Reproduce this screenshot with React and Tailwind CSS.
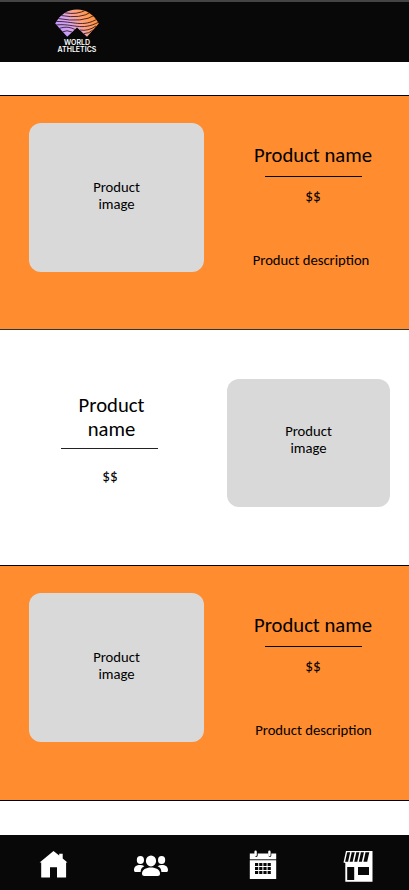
import React from "react";

function WorldAthleticsLogo() {
  return (
    <div className="flex w-[44px] flex-col items-center">
      <svg width="44" height="28" viewBox="0 0 44 28" className="block">
        <defs>
          <linearGradient id="fan" x1="0" y1="0.75" x2="1" y2="0.3">
            <stop offset="0" stopColor="#b894ff" />
            <stop offset="0.36" stopColor="#dca4f0" />
            <stop offset="0.6" stopColor="#ffa080" />
            <stop offset="1" stopColor="#ff9028" />
          </linearGradient>
          <clipPath id="fanClip">
            <path d="M0.2 14.6 C5 5.5 12.5 0.5 22 0.5 S39 5.5 43.8 14.6 L32 27.7 L22 18.6 L12.2 27.7Z" />
          </clipPath>
        </defs>
        <g clipPath="url(#fanClip)">
          <rect width="44" height="28" fill="url(#fan)" />
          <g fill="none" stroke="#1c0c10" strokeWidth="0.8">
            <path d="M10 3.8 Q22 6 31 1" />
            <path d="M6 6.5 Q26 10 36 3" />
            <path d="M3 9.5 Q28 14 40 6" />
            <path d="M1 12.5 C18 12 28 19 43 9.5" />
            <path d="M1 16 C18 14 26 22.5 44 13" />
            <path d="M4 19.5 C11 17 16 18.5 20 20.5" />
            <path d="M7 23 Q12 20.5 17 23" />
            <path d="M25 21 Q33 22.5 41 17" />
            <path d="M29 24.6 Q34 24.5 38 21" />
          </g>
        </g>
      </svg>
      <div className="mt-[2px] flex flex-col items-center whitespace-nowrap font-['Inter',sans-serif] text-[7px] font-semibold text-white">
        <span className="h-[7px] leading-[7px]">WORLD</span>
        <span className="h-[7px] leading-[7px]">ATHLETICS</span>
      </div>
    </div>
  );
}

function ImagePlaceholder({ className }) {
  return (
    <div className={"shrink-0 rounded-[12px] bg-[#d9d9d9] text-center text-[14.67px] leading-[16.5px] " + className}>
      Product
      <br />
      image
    </div>
  );
}

function FeaturedProduct({ className, descriptionClass }) {
  return (
    <section className={"flex border-t border-black bg-[#ff8c2e] pl-[29px] pt-[27px] " + className}>
      <ImagePlaceholder className="h-[149px] w-[175px] pt-[56px]" />
      <div className="ml-[39px] mt-[20px] flex w-[140px] flex-col items-center whitespace-nowrap">
        <h2 className="text-[20.67px] leading-[24px]">Product name</h2>
        <div className="mt-[9px] h-px w-[97px] bg-black" />
        <p className="mt-[11px] text-[15.3px] leading-[17px]">$$</p>
        <p className={"mt-[47px] text-[14.67px] leading-[17px] " + descriptionClass}>Product description</p>
      </div>
    </section>
  );
}

function HomeIcon() {
  return (
    <svg width="30" height="28" viewBox="0 0 30 28" fill="#fff">
      <path d="M0.6 12.5 14.5 1 20.2 5.6V3.7h3.5v4.9l4.8 3.9h-1.4V27.6H18V17.2h-7v10.4H2.2V12.5Z" />
    </svg>
  );
}

function PeopleIcon() {
  return (
    <svg width="36" height="22" viewBox="0 0 36 22" fill="#fff">
      <ellipse cx="7.4" cy="5" rx="3.6" ry="4" />
      <ellipse cx="28.6" cy="5" rx="3.6" ry="4" />
      <path d="M1 15.3C1 11.7 3.2 10 7.2 10q2.5 0 4.2 1.3C8.5 12.5 7.8 14 7.6 17H2.3Q1 17 1 15.3ZM35 15.3c0-3.6-2.2-5.3-6.2-5.3q-2.5 0-4.2 1.3c2.9 1.2 3.6 2.7 3.8 5.7h5.3Q35 17 35 15.3Z" />
      <ellipse cx="18" cy="5.9" rx="5.1" ry="5.5" />
      <path d="M9 18.5C9 14.5 13 12.4 18 12.4s9 2.1 9 6.1q0 2.5-2.5 2.5h-13Q9 21 9 18.5Z" />
    </svg>
  );
}

function CalendarIcon() {
  const columns = [6, 10.2, 14.4, 18.6];
  const rows = [13, 17, 21];
  return (
    <svg width="28" height="30" viewBox="0 0 28 30" fill="#fff">
      <path d="M0.8 3.5H27.2V9H0.8ZM0.8 10.2H27.2V29H0.8Z" />
      <path d="M0.8 9.5H27.2" stroke="#555" />
      <path d="M7.3 2.5V5.5M20.9 2.5V5.5" stroke="#080808" strokeWidth="2.8" strokeLinecap="round" />
      <path d="M6.6 1.8V5M20.4 1.8V5" stroke="#fff" strokeWidth="2.4" strokeLinecap="round" />
      <g fill="#080808">
        {rows.map((y) => columns.map((x) => <rect key={x + "-" + y} x={x} y={y} width="3.2" height="3" />))}
      </g>
    </svg>
  );
}

function StoreIcon() {
  return (
    <svg width="31" height="33" viewBox="0 0 31 33">
      <path d="M3 1H29.5V31.7H2.3V13L0.5 12.4Z" fill="#fff" />
      <path d="M4.2 2.3H26.3L24.2 11.7H2.1Z" fill="#080808" />
      <path d="M8 2 5.8 12M12.6 2 10.4 12M17.2 2 15 12M21.8 2 19.6 12" stroke="#fff" strokeWidth="1.5" />
      <path d="M4.2 17h7v13h-7ZM15 17h11v8H15Z" fill="#080808" />
    </svg>
  );
}

export default function App() {
  return (
    <div className="flex h-[890px] w-[409px] flex-col overflow-hidden bg-white font-['Carlito','Lato',sans-serif] text-black">
      <header className="h-[62px] border-t-2 border-[#444444] bg-[#080808] pl-[55px] pt-[7px]">
        <WorldAthleticsLogo />
      </header>
      <main className="mt-[33px] h-[706px]">
        <FeaturedProduct className="h-[234px]" descriptionClass="-ml-[4px]" />
        <section className="flex h-[236px] border-t border-[#333333] pl-[39px] pt-[49px]">
          <div className="mt-[15px] flex w-[141px] flex-col items-center text-center">
            <h2 className="pl-[4px] text-[20.67px] leading-[23.5px]">
              Product
              <br />
              name
            </h2>
            <div className="mt-[7px] h-px w-[97px] bg-[#222222]" />
            <p className="mt-[19px] pl-[1px] text-[15.3px] leading-[17px]">$$</p>
          </div>
          <ImagePlaceholder className="ml-[47px] h-[128px] w-[163px] pt-[44px]" />
        </section>
        <FeaturedProduct className="h-[236px] border-b" descriptionClass="ml-[1px]" />
      </main>
      <footer className="mt-[34px] flex h-[55px] bg-[#080808]">
        <a className="ml-[39px] mt-[15px]"><HomeIcon /></a>
        <a className="ml-[64px] mt-[20px]"><PeopleIcon /></a>
        <a className="ml-[80px] mt-[15px]"><CalendarIcon /></a>
        <a className="ml-[66px] mt-[15px]"><StoreIcon /></a>
      </footer>
    </div>
  );
}
